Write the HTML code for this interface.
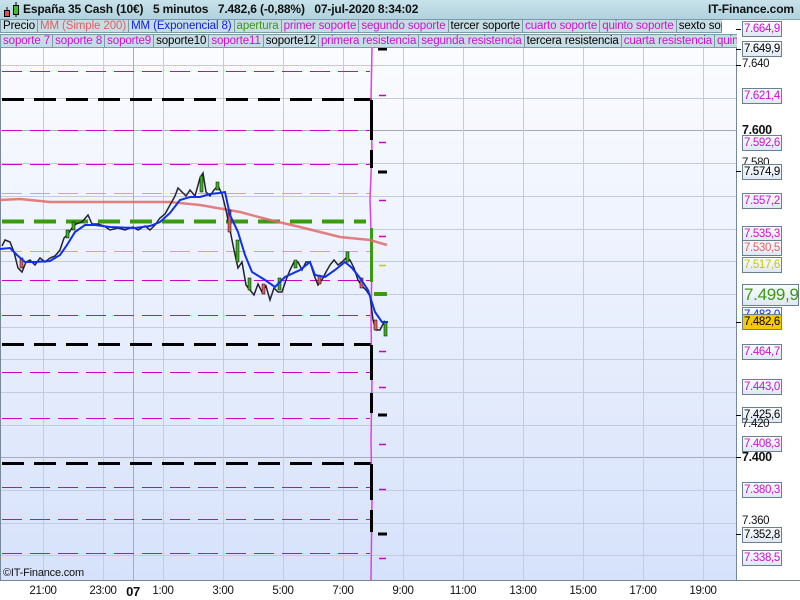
<!DOCTYPE html>
<html><head><meta charset="utf-8"><style>
body{margin:0;width:800px;height:600px;overflow:hidden;font-family:"Liberation Sans",sans-serif;background:#fff;position:relative}
.hdr{position:absolute;left:0;top:0;width:800px;height:19px;background:linear-gradient(#c8e2ea,#b0d2de);border-bottom:1px solid #8aa}
.hdr .t{position:absolute;left:23px;top:2px;font-size:12px;font-weight:bold;color:#111;white-space:pre;letter-spacing:-0.15px}
.hdr .r{position:absolute;right:6px;top:2px;font-size:12px;font-weight:bold;color:#111;letter-spacing:-0.1px}
.row{position:absolute;left:0;height:14px;display:flex;font-size:11.5px;white-space:nowrap;overflow:hidden;letter-spacing:-0.1px}
.row span{border:1px solid #7a9aa8;background:#c6dde4;padding:0 2px;line-height:13px;margin-right:-1px}
.m{color:#d010d0}
.ax{position:absolute;left:742px;width:37px;height:14px;border:1px solid #6a8090;background:linear-gradient(#fafcff,#dfe8f4);font-size:11.5px;line-height:14px;text-align:left;padding-left:1px;letter-spacing:-0.35px;white-space:nowrap;overflow:hidden}
.tl{position:absolute;left:742px;font-size:11.5px;color:#111;letter-spacing:-0.3px}
.bt{position:absolute;top:585px;font-size:11.5px;color:#111;transform:translateX(-50%);letter-spacing:-0.3px}
</style></head><body>
<svg width="800" height="600" style="position:absolute;left:0;top:0">
<defs><linearGradient id="bg" x1="0" y1="0" x2="0" y2="1"><stop offset="0" stop-color="#fbfcff"/><stop offset="1" stop-color="#d6e2fb"/></linearGradient></defs>
<rect x="0" y="48" width="736" height="532" fill="url(#bg)"/>
<g stroke="#c4cbdc" stroke-width="1">
<line x1="0" x2="736" y1="65.5" y2="65.5"/><line x1="0" x2="736" y1="98.5" y2="98.5"/><line x1="0" x2="736" y1="130.5" y2="130.5" stroke="#aab"/><line x1="0" x2="736" y1="163.5" y2="163.5"/><line x1="0" x2="736" y1="196.5" y2="196.5"/><line x1="0" x2="736" y1="229.5" y2="229.5"/><line x1="0" x2="736" y1="261.5" y2="261.5"/><line x1="0" x2="736" y1="294.5" y2="294.5"/><line x1="0" x2="736" y1="327.5" y2="327.5"/><line x1="0" x2="736" y1="359.5" y2="359.5"/><line x1="0" x2="736" y1="392.5" y2="392.5"/><line x1="0" x2="736" y1="425.5" y2="425.5"/><line x1="0" x2="736" y1="457.5" y2="457.5" stroke="#aab"/><line x1="0" x2="736" y1="490.5" y2="490.5"/><line x1="0" x2="736" y1="523.5" y2="523.5"/><line x1="0" x2="736" y1="555.5" y2="555.5"/>
<line x1="43.5" x2="43.5" y1="48" y2="580"/><line x1="103.5" x2="103.5" y1="48" y2="580"/><line x1="133.5" x2="133.5" y1="48" y2="580" stroke="#aab"/><line x1="163.5" x2="163.5" y1="48" y2="580"/><line x1="223.5" x2="223.5" y1="48" y2="580"/><line x1="283.5" x2="283.5" y1="48" y2="580"/><line x1="343.5" x2="343.5" y1="48" y2="580"/><line x1="403.5" x2="403.5" y1="48" y2="580"/><line x1="463.5" x2="463.5" y1="48" y2="580"/><line x1="523.5" x2="523.5" y1="48" y2="580"/><line x1="583.5" x2="583.5" y1="48" y2="580"/><line x1="643.5" x2="643.5" y1="48" y2="580"/><line x1="703.5" x2="703.5" y1="48" y2="580"/>
</g>
<line x1="0.5" x2="0.5" y1="48" y2="580" stroke="#789"/>
<line x1="736.5" x2="736.5" y1="48" y2="580" stroke="#789"/>
<line x1="0" x2="800" y1="580.5" y2="580.5" stroke="#789"/>
<g fill="none" stroke="#d000d0" stroke-width="1" stroke-dasharray="20 8">
<path d="M2 71.5H370M2 130.5H370M2 164.5H370M2 280.5H370M2 315.5H370M2 372.5H370M2 418.5H370M2 487.5H370M2 519.5H370M2 553.5H370"/>
</g>
<g fill="none" stroke="#c8c800" stroke-width="1" stroke-dasharray="20 8">
<path d="M2 193.5H370M2 251.5H370"/>
</g>
<line x1="2" x2="366" y1="221.5" y2="221.5" stroke="#3a9a10" stroke-width="4" stroke-dasharray="22 10"/>
<g stroke="#000" stroke-width="3" stroke-dasharray="22 10">
<line x1="2" x2="372" y1="99.5" y2="99.5"/><line x1="2" x2="372" y1="344.5" y2="344.5"/><line x1="2" x2="372" y1="463.5" y2="463.5"/>
</g>
<polyline points="372,48 371,100 372,150 370,200 372,260 371,320 372,380 371,440 372,500 371,580" fill="none" stroke="#e040e0" stroke-width="1.5"/>
<g stroke="#000" stroke-width="3">
<line x1="371.5" x2="371.5" y1="100" y2="140"/><line x1="371.5" x2="371.5" y1="150" y2="168"/><line x1="371.5" x2="371.5" y1="345" y2="380"/><line x1="371.5" x2="371.5" y1="393" y2="413"/><line x1="371.5" x2="371.5" y1="464" y2="500"/><line x1="371.5" x2="371.5" y1="510" y2="532"/>
</g>
<line x1="371.5" x2="371.5" y1="228" y2="282" stroke="#3a9a10" stroke-width="3"/>
<g stroke-width="1.5">
<line x1="379" x2="386" y1="95.5" y2="95.5" stroke="#d000d0"/><line x1="379" x2="386" y1="142.5" y2="142.5" stroke="#d000d0"/><line x1="378" x2="387" y1="172" y2="172" stroke="#000" stroke-width="3"/><line x1="379" x2="386" y1="200.5" y2="200.5" stroke="#d000d0"/><line x1="379" x2="386" y1="236.5" y2="236.5" stroke="#d000d0"/><line x1="379" x2="386" y1="265.5" y2="265.5" stroke="#c8c800"/><line x1="374" x2="387" y1="294" y2="294" stroke="#3a9a10" stroke-width="4"/><line x1="379" x2="386" y1="351.5" y2="351.5" stroke="#d000d0"/><line x1="379" x2="386" y1="387.5" y2="387.5" stroke="#d000d0"/><line x1="378" x2="387" y1="415" y2="415" stroke="#000" stroke-width="3"/><line x1="379" x2="386" y1="444.5" y2="444.5" stroke="#d000d0"/><line x1="379" x2="386" y1="489.5" y2="489.5" stroke="#d000d0"/><line x1="378" x2="387" y1="534" y2="534" stroke="#000" stroke-width="3"/><line x1="379" x2="386" y1="558.5" y2="558.5" stroke="#d000d0"/><line x1="378" x2="387" y1="49" y2="49" stroke="#000" stroke-width="3"/>
</g>
<polyline points="0,200 20,199 50,202 100,202 170,202 200,205 240,212 270,220 300,227 340,237 370,240 387,245" fill="none" stroke="#e06868" stroke-width="2.5" opacity="0.85"/>
<polyline points="2,246 5,240 10,242 14,252 18,268 22,272 26,262 30,260 35,265 40,258 45,262 50,258 55,256 60,250 64,238 68,234 72,228 76,224 82,222 88,215 92,224 98,224 104,226 110,230 118,228 125,230 133,227 138,230 145,226 150,230 155,225 160,218 165,214 170,205 175,196 178,188 182,192 186,196 190,190 195,196 200,178 203,173 206,192 210,196 214,190 218,186 222,194 226,210 230,230 234,250 238,268 242,262 246,285 250,290 254,295 258,284 262,292 266,286 270,300 274,288 278,292 282,292 286,280 290,270 294,262 298,262 302,270 306,262 310,262 314,275 318,285 322,280 326,272 330,265 334,260 338,265 342,262 346,258 350,260 354,268 358,280 362,286 366,290 370,296 373,320 376,330 380,330 384,322 386,332" fill="none" stroke="#223" stroke-width="1.5"/>
<g stroke="#000" stroke-width="0.5">
<rect x="20" y="258" width="3" height="10" fill="#e06060"/><rect x="66" y="230" width="3" height="8" fill="#40b020"/><rect x="72" y="222" width="3" height="8" fill="#40b020"/><rect x="200" y="176" width="3" height="16" fill="#40b020"/><rect x="216" y="182" width="3" height="8" fill="#40b020"/><rect x="228" y="210" width="3" height="22" fill="#e06060"/><rect x="236" y="240" width="3" height="22" fill="#40b020"/><rect x="248" y="278" width="3" height="12" fill="#40b020"/><rect x="262" y="284" width="3" height="10" fill="#e06060"/><rect x="278" y="278" width="3" height="12" fill="#40b020"/><rect x="294" y="260" width="3" height="8" fill="#40b020"/><rect x="318" y="276" width="3" height="8" fill="#e06060"/><rect x="346" y="252" width="3" height="10" fill="#40b020"/><rect x="360" y="278" width="3" height="10" fill="#e06060"/><rect x="374" y="320" width="3" height="10" fill="#e06060"/><rect x="384" y="322" width="3" height="14" fill="#40b020"/>
</g>
<polyline points="0,249 10,248 17,255 25,262 35,262 50,261 60,255 67,245 75,232 85,225 95,225 110,227 135,228 150,226 160,222 170,213 180,200 190,197 200,197 210,194 220,193 225,192 230,215 238,232 245,255 252,272 265,280 275,287 285,277 300,270 310,262 315,275 325,277 335,270 345,262 352,268 360,278 368,290 375,312 382,322 388,322" fill="none" stroke="#1030f0" stroke-width="2"/>
<g stroke="#000"><line x1="736" x2="741" y1="29.5" y2="29.5"/><line x1="736" x2="741" y1="49.5" y2="49.5"/><line x1="736" x2="741" y1="65.5" y2="65.5"/><line x1="736" x2="741" y1="171.5" y2="171.5"/><line x1="736" x2="741" y1="322.5" y2="322.5"/><line x1="736" x2="741" y1="415.5" y2="415.5"/><line x1="736" x2="741" y1="457.5" y2="457.5"/><line x1="736" x2="741" y1="534.5" y2="534.5"/></g>
</svg>
<div class="hdr"><svg width="20" height="19" style="position:absolute;left:2px;top:0"><line x1="5" x2="5" y1="7" y2="17" stroke="#000"/><rect x="2.5" y="10.5" width="5" height="6" fill="#e05050" stroke="#000"/><line x1="14" x2="14" y1="2" y2="17" stroke="#000"/><rect x="11.5" y="5.5" width="5" height="9" fill="#40c020" stroke="#000"/></svg><span class="t">España 35 Cash (10€)   5 minutos   7.482,6 (-0,88%)   07-jul-2020 8:34:02</span><span class="r">IT-Finance.com</span></div>
<div class="row" style="top:19px;width:722px"><span>Precio</span><span style="color:#e06060">MM (Simple 200)</span><span style="color:#1020f0">MM (Exponencial 8)</span><span style="color:#3a9a10">apertura</span><span class="m">primer soporte</span><span class="m">segundo soporte</span><span>tercer soporte</span><span class="m">cuarto soporte</span><span class="m">quinto soporte</span><span>sexto soporte</span></div>
<div class="row" style="top:34px;width:737px"><span class="m">soporte 7</span><span class="m">soporte 8</span><span class="m">soporte9</span><span>soporte10</span><span class="m">soporte11</span><span>soporte12</span><span class="m">primera resistencia</span><span class="m">segunda resistencia</span><span>tercera resistencia</span><span class="m">cuarta resistencia</span><span class="m">quinta resistencia</span></div>
<div class="ax m" style="top:21px">7.664,9</div>
<div class="ax" style="top:41px">7.649,9</div>
<div class="tl" style="top:58px">7.640</div>
<div class="ax m" style="top:88px">7.621,4</div>
<div class="tl" style="top:123px;font-weight:bold;font-size:12.5px">7.600</div>
<div class="ax m" style="top:135px">7.592,6</div>
<div class="tl" style="top:157px">7.580</div>
<div class="ax" style="top:164px">7.574,9</div>
<div class="ax m" style="top:193px">7.557,2</div>
<div class="ax m" style="top:226px">7.535,3</div>
<div class="ax" style="top:240px;color:#e06060">7.530,5</div>
<div class="ax" style="top:257px;color:#c8c800">7.517,6</div>
<div class="ax" style="top:284px;width:54px;height:20px;line-height:20px;font-size:17px;color:#3a9a10;letter-spacing:-0.3px">7.499,9</div>
<div class="ax" style="top:307px;color:#1020f0">7.483,0</div>
<div class="ax" style="top:314px;background:#f8c800;color:#000">7.482,6</div>
<div class="ax m" style="top:344px">7.464,7</div>
<div class="ax m" style="top:379px">7.443,0</div>
<div class="ax" style="top:407px">7.425,6</div>
<div class="tl" style="top:418px">7.420</div>
<div class="ax m" style="top:436px">7.408,3</div>
<div class="tl" style="top:450px;font-weight:bold;font-size:12.5px">7.400</div>
<div class="ax m" style="top:482px">7.380,3</div>
<div class="tl" style="top:515px">7.360</div>
<div class="ax" style="top:527px">7.352,8</div>
<div class="ax m" style="top:550px">7.338,5</div>
<div style="position:absolute;left:3px;top:567px;font-size:11px;color:#111;letter-spacing:-0.2px">©IT-Finance.com</div>
<div class="bt" style="left:43px">21:00</div><div class="bt" style="left:103px">23:00</div><div class="bt" style="left:133px;font-weight:bold;font-size:13px;top:584px">07</div><div class="bt" style="left:163px">1:00</div><div class="bt" style="left:223px">3:00</div><div class="bt" style="left:283px">5:00</div><div class="bt" style="left:343px">7:00</div><div class="bt" style="left:403px">9:00</div><div class="bt" style="left:463px">11:00</div><div class="bt" style="left:523px">13:00</div><div class="bt" style="left:583px">15:00</div><div class="bt" style="left:643px">17:00</div><div class="bt" style="left:703px">19:00</div>
</body></html>
